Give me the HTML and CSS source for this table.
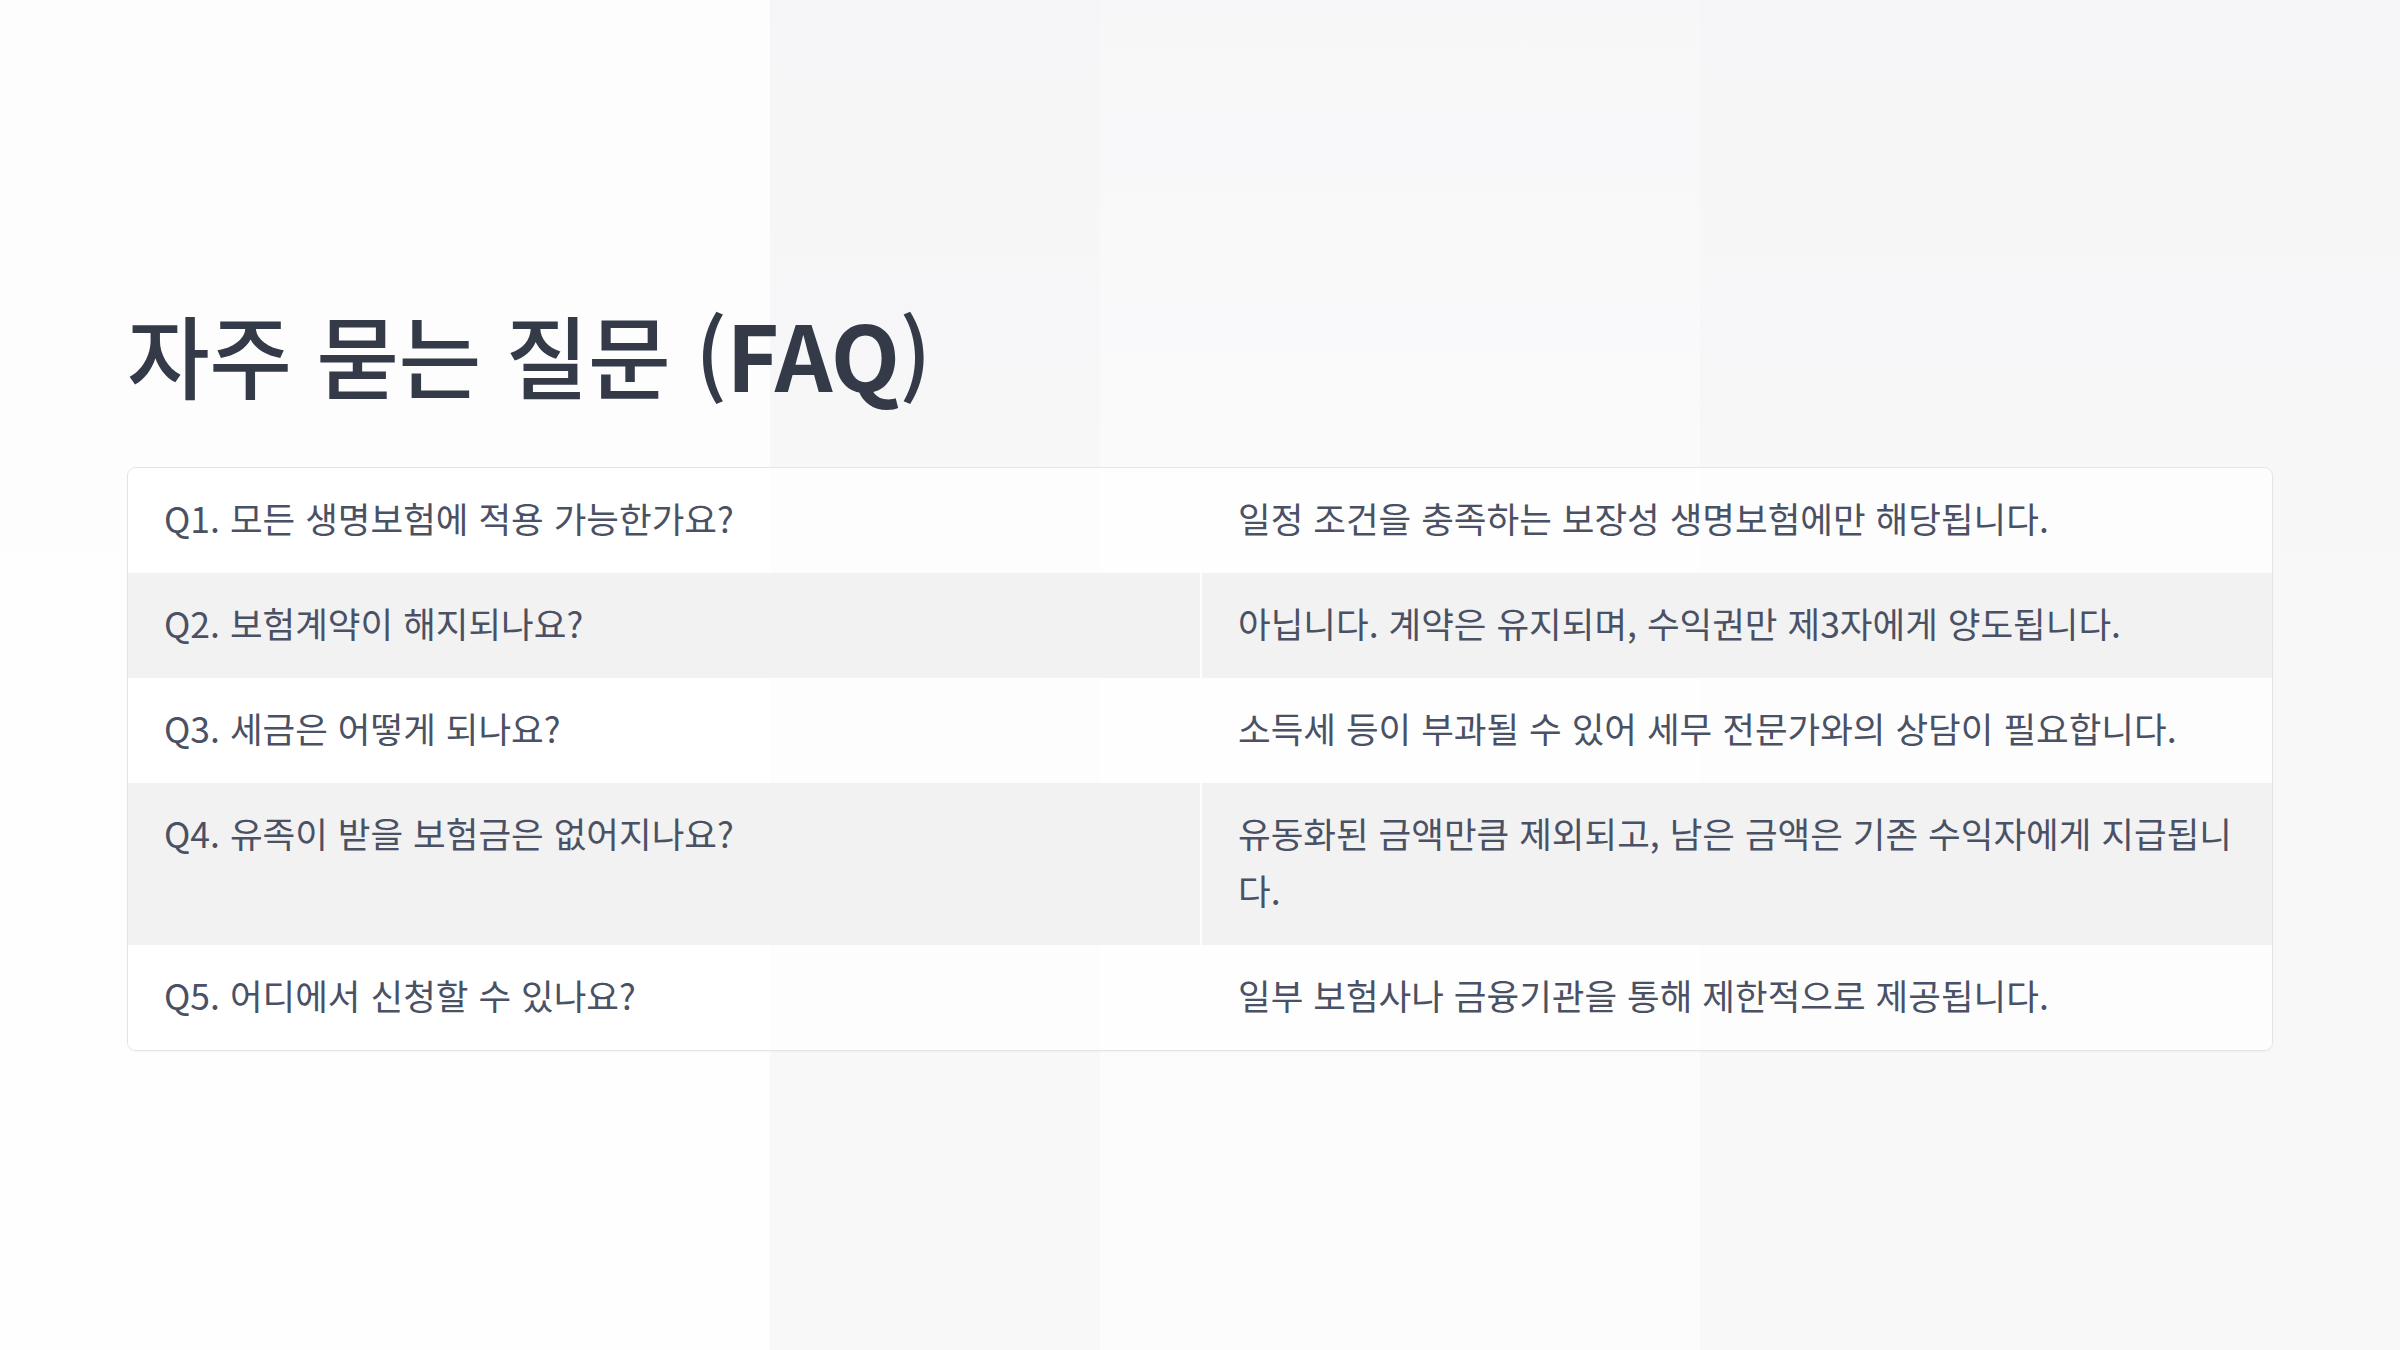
FILE: index.html
```html
<!DOCTYPE html>
<html lang="ko">
<head>
<meta charset="utf-8">
<title>자주 묻는 질문 (FAQ)</title>
<link rel="stylesheet" href="styles.css">
</head>
<body>
<main class="slide">
  <h1 class="title">자주 묻는 질문 (<span class="latin">FAQ</span>)</h1>
  <div class="faq">
    <div class="row">
      <div class="cell q">Q1. 모든 생명보험에 적용 가능한가요?</div>
      <div class="cell a">일정 조건을 충족하는 보장성 생명보험에만 해당됩니다.</div>
    </div>
    <div class="row alt">
      <div class="cell q">Q2. 보험계약이 해지되나요?</div>
      <div class="cell a">아닙니다. 계약은 유지되며, 수익권만 제3자에게 양도됩니다.</div>
    </div>
    <div class="row">
      <div class="cell q">Q3. 세금은 어떻게 되나요?</div>
      <div class="cell a">소득세 등이 부과될 수 있어 세무 전문가와의 상담이 필요합니다.</div>
    </div>
    <div class="row alt">
      <div class="cell q">Q4. 유족이 받을 보험금은 없어지나요?</div>
      <div class="cell a">유동화된 금액만큼 제외되고, 남은 금액은 기존 수익자에게 지급됩니다.</div>
    </div>
    <div class="row">
      <div class="cell q">Q5. 어디에서 신청할 수 있나요?</div>
      <div class="cell a">일부 보험사나 금융기관을 통해 제한적으로 제공됩니다.</div>
    </div>
  </div>
</main>
</body>
</html>
```

FILE: styles.css
```css
html, body {
  margin: 0;
  padding: 0;
}

body {
  width: 2400px;
  height: 1350px;
  overflow: hidden;
  font-family: "Noto Sans CJK KR", "Noto Sans", sans-serif;
  color: #4a5164;
  background-color: #f8f8f9;
  background-image:
    linear-gradient(90deg, rgba(255,255,255,0.8) 0, rgba(255,255,255,0.8) 770px, rgba(255,255,255,0) 770px),
    linear-gradient(180deg, rgba(244,244,246,0.6) 0, rgba(250,250,250,0) 700px),
    linear-gradient(90deg, rgba(255,255,255,0) 1100px, rgba(255,255,255,0.55) 1100px, rgba(255,255,255,0.55) 1700px, rgba(255,255,255,0) 1700px);
}

.slide {
  box-sizing: border-box;
  height: 1350px;
  padding: 300px 127px 0 127px;
}

.title {
  margin: 0 0 61px 0;
  font-size: 90px;
  line-height: 106px;
  font-weight: 500;
  color: #353a48;
  letter-spacing: -0.5px;
}

.title .latin {
  font-weight: 700;
}

.faq {
  border: 1px solid #e4e4e6;
  border-radius: 9px;
  overflow: hidden;
  box-shadow: 0 1px 2px rgba(0,0,0,0.04);
}

.row {
  display: grid;
  grid-template-columns: 1fr 1fr;
  background: rgba(255,255,255,0.75);
}

.row.alt {
  background: #f2f2f2;
}

.cell {
  padding: 21px 36px 27px 36px;
  font-size: 35.5px;
  line-height: 57px;
}

.a {
  border-left: 2px solid rgba(255,255,255,0.9);
}
```
